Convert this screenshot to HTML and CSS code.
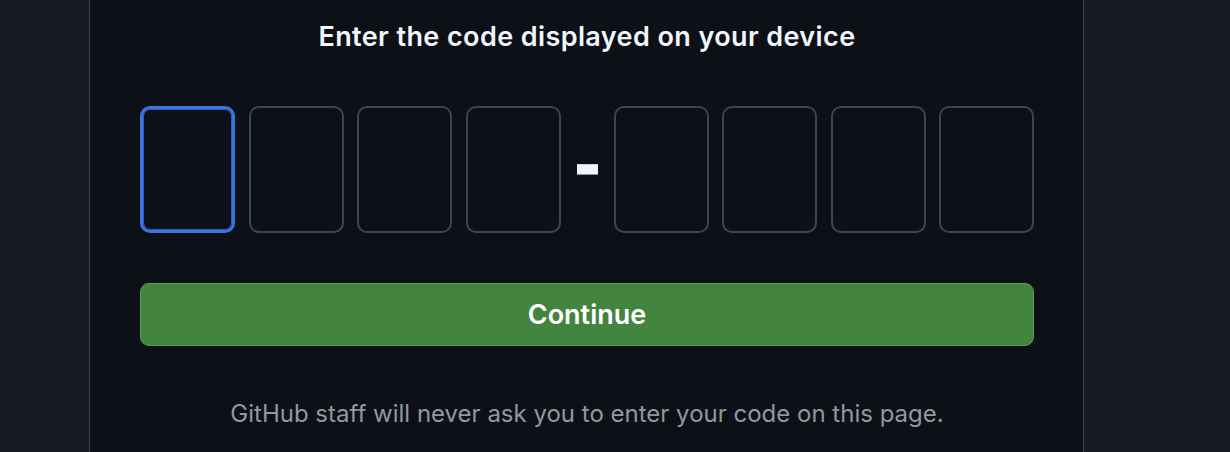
FILE: index.html
```html
<!DOCTYPE html>
<html lang="en">
<head>
<meta charset="utf-8">
<title>Device activation</title>
<link rel="stylesheet" href="styles.css">
</head>
<body>
<div class="page">
  <main class="card">
    <h1 class="title">Enter the code displayed on your device</h1>
    <div class="code-row">
      <input class="code-box focused" type="text" maxlength="1" aria-label="Code character 1">
      <input class="code-box" type="text" maxlength="1" aria-label="Code character 2">
      <input class="code-box" type="text" maxlength="1" aria-label="Code character 3">
      <input class="code-box" type="text" maxlength="1" aria-label="Code character 4">
      <span class="dash" aria-hidden="true"></span>
      <input class="code-box" type="text" maxlength="1" aria-label="Code character 5">
      <input class="code-box" type="text" maxlength="1" aria-label="Code character 6">
      <input class="code-box" type="text" maxlength="1" aria-label="Code character 7">
      <input class="code-box" type="text" maxlength="1" aria-label="Code character 8">
    </div>
    <button class="continue" type="button">Continue</button>
    <p class="note">GitHub staff will never ask you to enter your code on this page.</p>
  </main>
</div>
</body>
</html>
```
FILE: styles.css
```css
* { box-sizing: border-box; }
html, body {
  margin: 0;
  padding: 0;
  height: 100%;
}
body {
  background: #161b22;
  font-family: Inter, "Liberation Sans", Arial, sans-serif;
  color: #f0f6fc;
  overflow: hidden;
}
.page {
  display: flex;
  height: 452px;
}
.card {
  margin-left: 89px;
  width: 995px;
  height: 452px;
  background: #0d1117;
  border-left: 1.5px solid #3d444d;
  border-right: 1.5px solid #3d444d;
  padding: 0 49px 0 50px;
  display: flex;
  flex-direction: column;
}
.title {
  margin: 21px 0 0;
  font-size: 27px;
  line-height: 32px;
  font-weight: 600;
  letter-spacing: 0.4px;
  text-align: center;
  color: #f0f6fc;
}
.code-row {
  margin-top: 53px;
  display: flex;
  align-items: center;
  gap: 13.5px;
}
.code-box {
  width: 95px;
  height: 127px;
  background: #0d1117;
  border: 2px solid #3f454e;
  border-radius: 10px;
  padding: 0;
  outline: none;
}
.code-box.focused {
  border: 3px solid #3a74de;
  box-shadow: inset 0 0 0 1px #2c5fc0;
}
.dash {
  width: 26px;
  height: 127px;
  display: flex;
  align-items: center;
  justify-content: center;
}
.dash::before {
  content: "";
  width: 21px;
  height: 9px;
  background: #f0f6fc;
  border-top: 1px solid #c9d1d9;
  border-bottom: 1px solid #8b949e;
}
.continue {
  margin-top: 50px;
  height: 63px;
  width: 100%;
  background: #438440;
  border: 1.5px solid #5d9b58;
  border-radius: 9px;
  color: #ffffff;
  font-family: inherit;
  font-size: 27px;
  font-weight: 600;
  cursor: pointer;
}
.note {
  margin: 54px 0 0;
  font-size: 24px;
  line-height: 28px;
  text-align: center;
  color: #9198a1;
}
```
